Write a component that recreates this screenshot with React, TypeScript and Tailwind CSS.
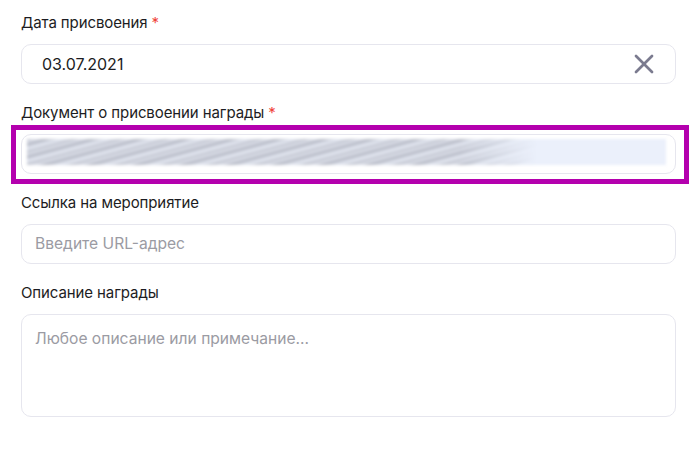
import { X } from 'lucide-react';

const Label = ({ text, required }: { text: string; required?: boolean }) => (
  <div className="text-[15px] leading-5 text-[#1c1c22] mb-[11px] tracking-[-0.1px]">
    {text}
    {required && <span className="text-[#f0443a] ml-1">*</span>}
  </div>
);

export default function App() {
  return (
    <div className="bg-white w-[697px] h-[452px] px-[21px] pt-[13px] font-['Inter','Noto_Sans',sans-serif]">
      <Label text="Дата присвоения" required />
      <div className="h-10 border border-[#e6e6ee] rounded-[10px] flex items-center pl-5 pr-[15px]">
        <span className="flex-1 text-[16px] text-[#1c1c22]">03.07.2021</span>
        <X className="w-8 h-8 text-[#7b7b8f]" strokeWidth={2} />
      </div>

      <div className="mt-[19px]">
        <Label text="Документ о присвоении награды" required />
        <div className="relative">
          <div className="h-10 border border-[#e6e6ee] rounded-[10px] px-[5px] py-[4px]">
            <div className="relative h-[26px] w-[639px] bg-[#ebf0fb] blur-[1.5px] overflow-hidden">
              <div className="absolute left-0 top-0 h-full w-[510px] bg-[repeating-linear-gradient(165deg,#b3b6c1_0px,#dde0ea_3px,#a4a7b3_5px,#e4e8f2_9px,#c4c7d1_12px)] opacity-80 [mask-image:linear-gradient(to_right,black_85%,transparent)]" />
            </div>
          </div>
          <div className="absolute -left-[10px] -right-[13px] -top-[9px] -bottom-[10px] border-[5px] border-[#b400ae] pointer-events-none" />
        </div>
      </div>

      <div className="mt-[19px]">
        <Label text="Ссылка на мероприятие" />
        <div className="h-10 border border-[#e6e6ee] rounded-[10px] flex items-center px-[13px] text-[15.6px] text-[#9b9ba3]">
          Введите URL-адрес
        </div>
      </div>

      <div className="mt-[19px]">
        <Label text="Описание награды" />
        <div className="h-[103px] border border-[#e6e6ee] rounded-[10px] px-[13px] pt-[12px] text-[15.6px] text-[#9b9ba3]">
          Любое описание или примечание...
        </div>
      </div>
    </div>
  );
}
